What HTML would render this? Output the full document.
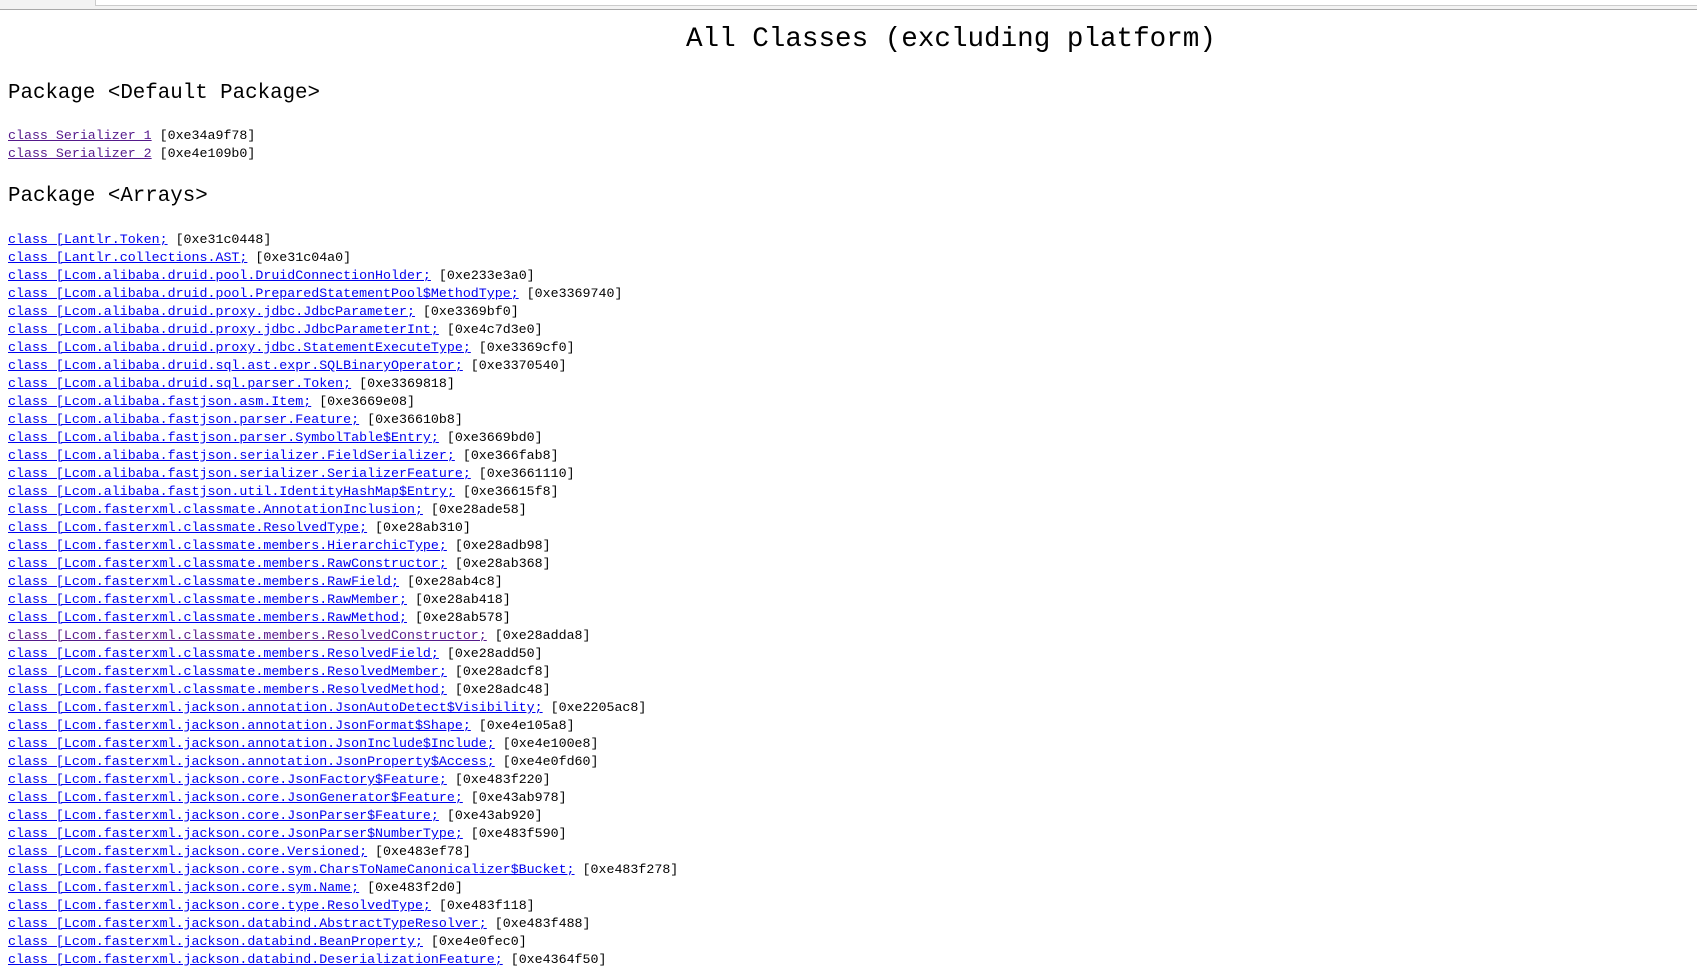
<!DOCTYPE html>
<html><head><meta charset="utf-8"><style>
body{margin:0;width:1697px;height:965px;overflow:hidden;background:#fff;font-family:"Liberation Mono","Noto Sans CJK SC",monospace;color:#000}
.bar{position:absolute;left:0;top:0;width:1697px;height:9px;background:#f3f3f3;border-bottom:1px solid #a8a8a8}
.bar i{position:absolute;left:95px;top:0;width:1602px;height:5px;background:#fff;border-left:1px solid #ccc;border-bottom:1px solid #ccc}
h1{position:absolute;left:686px;top:22px;margin:0;font-weight:normal;font-size:27.6px;line-height:36px;white-space:nowrap}
h2{position:absolute;left:8px;margin:0;font-weight:normal;font-size:20.8px;line-height:28px;white-space:nowrap}
.l{position:absolute;left:8px;font-size:13.3px;line-height:18px;white-space:nowrap}
.l div{height:18px}
a{color:#0000ee;text-decoration:underline}
a.v{color:#551a8b}
</style></head><body>
<div class="bar"><i></i></div>
<h1>All Classes (excluding platform)</h1>
<h2 style="top:80px">Package &lt;Default Package&gt;</h2>
<div class="l" style="top:127px"><div><a class="v">class Serializer 1</a> [0xe34a9f78]</div><div><a class="v">class Serializer 2</a> [0xe4e109b0]</div></div>
<h2 style="top:183px">Package &lt;Arrays&gt;</h2>
<div class="l" style="top:231px"><div><a>class [Lantlr.Token;</a> [0xe31c0448]</div><div><a>class [Lantlr.collections.AST;</a> [0xe31c04a0]</div><div><a>class [Lcom.alibaba.druid.pool.DruidConnectionHolder;</a> [0xe233e3a0]</div><div><a>class [Lcom.alibaba.druid.pool.PreparedStatementPool$MethodType;</a> [0xe3369740]</div><div><a>class [Lcom.alibaba.druid.proxy.jdbc.JdbcParameter;</a> [0xe3369bf0]</div><div><a>class [Lcom.alibaba.druid.proxy.jdbc.JdbcParameterInt;</a> [0xe4c7d3e0]</div><div><a>class [Lcom.alibaba.druid.proxy.jdbc.StatementExecuteType;</a> [0xe3369cf0]</div><div><a>class [Lcom.alibaba.druid.sql.ast.expr.SQLBinaryOperator;</a> [0xe3370540]</div><div><a>class [Lcom.alibaba.druid.sql.parser.Token;</a> [0xe3369818]</div><div><a>class [Lcom.alibaba.fastjson.asm.Item;</a> [0xe3669e08]</div><div><a>class [Lcom.alibaba.fastjson.parser.Feature;</a> [0xe36610b8]</div><div><a>class [Lcom.alibaba.fastjson.parser.SymbolTable$Entry;</a> [0xe3669bd0]</div><div><a>class [Lcom.alibaba.fastjson.serializer.FieldSerializer;</a> [0xe366fab8]</div><div><a>class [Lcom.alibaba.fastjson.serializer.SerializerFeature;</a> [0xe3661110]</div><div><a>class [Lcom.alibaba.fastjson.util.IdentityHashMap$Entry;</a> [0xe36615f8]</div><div><a>class [Lcom.fasterxml.classmate.AnnotationInclusion;</a> [0xe28ade58]</div><div><a>class [Lcom.fasterxml.classmate.ResolvedType;</a> [0xe28ab310]</div><div><a>class [Lcom.fasterxml.classmate.members.HierarchicType;</a> [0xe28adb98]</div><div><a>class [Lcom.fasterxml.classmate.members.RawConstructor;</a> [0xe28ab368]</div><div><a>class [Lcom.fasterxml.classmate.members.RawField;</a> [0xe28ab4c8]</div><div><a>class [Lcom.fasterxml.classmate.members.RawMember;</a> [0xe28ab418]</div><div><a>class [Lcom.fasterxml.classmate.members.RawMethod;</a> [0xe28ab578]</div><div><a class="v">class [Lcom.fasterxml.classmate.members.ResolvedConstructor;</a> [0xe28adda8]</div><div><a>class [Lcom.fasterxml.classmate.members.ResolvedField;</a> [0xe28add50]</div><div><a>class [Lcom.fasterxml.classmate.members.ResolvedMember;</a> [0xe28adcf8]</div><div><a>class [Lcom.fasterxml.classmate.members.ResolvedMethod;</a> [0xe28adc48]</div><div><a>class [Lcom.fasterxml.jackson.annotation.JsonAutoDetect$Visibility;</a> [0xe2205ac8]</div><div><a>class [Lcom.fasterxml.jackson.annotation.JsonFormat$Shape;</a> [0xe4e105a8]</div><div><a>class [Lcom.fasterxml.jackson.annotation.JsonInclude$Include;</a> [0xe4e100e8]</div><div><a>class [Lcom.fasterxml.jackson.annotation.JsonProperty$Access;</a> [0xe4e0fd60]</div><div><a>class [Lcom.fasterxml.jackson.core.JsonFactory$Feature;</a> [0xe483f220]</div><div><a>class [Lcom.fasterxml.jackson.core.JsonGenerator$Feature;</a> [0xe43ab978]</div><div><a>class [Lcom.fasterxml.jackson.core.JsonParser$Feature;</a> [0xe43ab920]</div><div><a>class [Lcom.fasterxml.jackson.core.JsonParser$NumberType;</a> [0xe483f590]</div><div><a>class [Lcom.fasterxml.jackson.core.Versioned;</a> [0xe483ef78]</div><div><a>class [Lcom.fasterxml.jackson.core.sym.CharsToNameCanonicalizer$Bucket;</a> [0xe483f278]</div><div><a>class [Lcom.fasterxml.jackson.core.sym.Name;</a> [0xe483f2d0]</div><div><a>class [Lcom.fasterxml.jackson.core.type.ResolvedType;</a> [0xe483f118]</div><div><a>class [Lcom.fasterxml.jackson.databind.AbstractTypeResolver;</a> [0xe483f488]</div><div><a>class [Lcom.fasterxml.jackson.databind.BeanProperty;</a> [0xe4e0fec0]</div><div><a>class [Lcom.fasterxml.jackson.databind.DeserializationFeature;</a> [0xe4364f50]</div></div>
</body></html>
